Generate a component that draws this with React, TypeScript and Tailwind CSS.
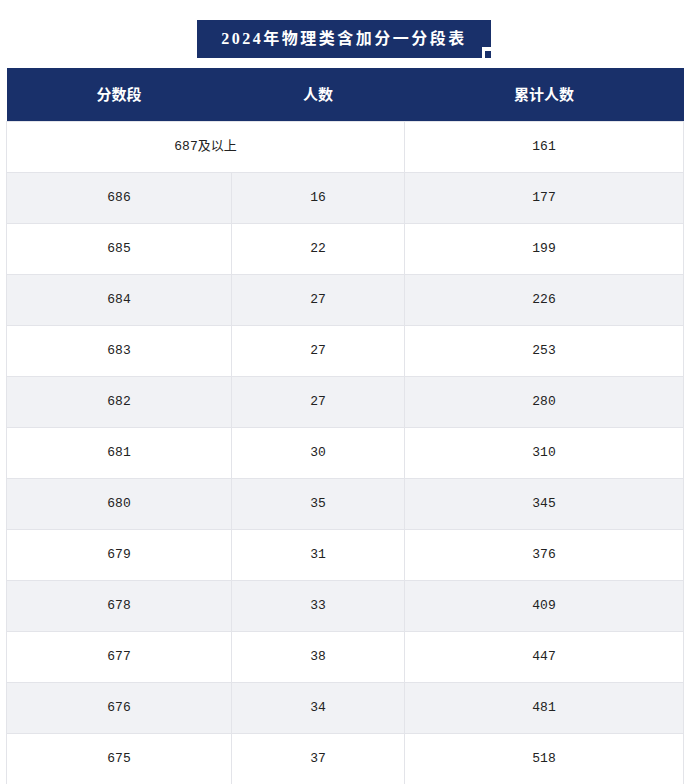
import React from "react";

const rows: [string, string, string][] = [
  ["686", "16", "177"],
  ["685", "22", "199"],
  ["684", "27", "226"],
  ["683", "27", "253"],
  ["682", "27", "280"],
  ["681", "30", "310"],
  ["680", "35", "345"],
  ["679", "31", "376"],
  ["678", "33", "409"],
  ["677", "38", "447"],
  ["676", "34", "481"],
  ["675", "37", "518"],
  ["", "", ""],
];

const cell = "border border-[#e3e4e9] text-center align-middle h-[51px] p-0";

export default function App() {
  return (
    <div
      className="w-[688px] bg-white pt-[20px] text-[#222]"
      style={{ fontFamily: '"Liberation Mono", "Noto Sans CJK SC", monospace' }}
    >
      <div className="flex justify-center">
        <div className="relative flex h-[38px] w-[294px] items-center justify-center bg-[#19306a]">
          <span
            className="text-[16px] font-bold tracking-[2.5px] text-white"
            style={{ fontFamily: '"Liberation Serif", "Noto Sans CJK SC", serif' }}
          >
            2024年物理类含加分一分段表
          </span>
          <div className="absolute bottom-0 right-0 flex h-[11px] w-[9px] items-end justify-end bg-white">
            <div className="h-[7px] w-[6px] bg-[#19306a]" />
          </div>
        </div>
      </div>
      <div className="mt-[10px] px-[6px]">
        <table className="w-[677px] table-fixed border-collapse text-[13px]">
          <colgroup>
            <col className="w-[225px]" />
            <col className="w-[173px]" />
            <col className="w-[279px]" />
          </colgroup>
          <thead>
            <tr
              className="h-[53px] bg-[#19306a] text-[15px] font-bold text-white"
              style={{ fontFamily: '"Noto Sans CJK SC", sans-serif' }}
            >
              <th className="p-0 pb-[1px] text-center">分数段</th>
              <th className="p-0 pb-[1px] text-center">人数</th>
              <th className="p-0 pb-[1px] text-center">累计人数</th>
            </tr>
          </thead>
          <tbody>
            <tr className="bg-white">
              <td className={cell} colSpan={2}>687及以上</td>
              <td className={cell}>161</td>
            </tr>
            {rows.map((r, i) => (
              <tr key={i} className={i % 2 === 0 ? "bg-[#f1f2f5]" : "bg-white"}>
                <td className={cell}>{r[0]}</td>
                <td className={cell}>{r[1]}</td>
                <td className={cell}>{r[2]}</td>
              </tr>
            ))}
          </tbody>
        </table>
      </div>
    </div>
  );
}
